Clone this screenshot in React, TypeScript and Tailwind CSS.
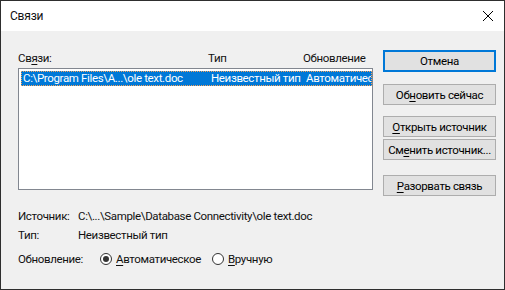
import React from "react";

const U = ({ children }: { children: React.ReactNode }) => (
  <span className="underline underline-offset-[2px] decoration-[1px]">{children}</span>
);

const Btn = ({ children, def = false, cls = "" }: { children: React.ReactNode; def?: boolean; cls?: string }) => (
  <div
    className={`w-[113px] h-[21px] flex items-center justify-center whitespace-nowrap bg-[#e1e1e1] text-black ${
      def ? "border-2 border-[#0078d7]" : "border border-[#adadad]"
    } ${cls}`}
  >
    {children}
  </div>
);

const Radio = ({ checked }: { checked?: boolean }) => (
  <div className="w-[12px] h-[12px] rounded-full border border-[#333] bg-white flex items-center justify-center">
    {checked && <div className="w-[6px] h-[6px] rounded-full bg-[#333]" />}
  </div>
);

export default function App() {
  return (
    <div
      className="w-[505px] h-[290px] border border-[#2e2e2e] bg-[#f0f0f0] flex flex-col text-[11.5px] tracking-[-0.35px] leading-[16px] text-[#111]"
      style={{ fontFamily: 'Roboto, "Noto Sans", sans-serif' }}
    >
      <div className="h-[30px] bg-white flex items-center justify-between pl-[9px] pr-[10px]">
        <span className="text-[12px] tracking-[-0.2px]">Связи</span>
        <svg width="12" height="12" viewBox="0 0 12 12">
          <path d="M1 1 L11 11 M11 1 L1 11" stroke="#000" strokeWidth="1" />
        </svg>
      </div>
      <div className="flex pl-[17px] pt-[19px]">
        <div className="w-[355px] flex flex-col">
          <div className="h-[18px] flex items-start whitespace-nowrap">
            <span className="w-[190px]">
              Св<U>я</U>зи:
            </span>
            <span className="w-[95px]">Тип</span>
            <span>Обновление</span>
          </div>
          <div className="h-[122px] border border-[#828790] bg-white pt-[2px] pl-[2px] overflow-hidden">
            <div className="h-[15px] w-[351px] overflow-hidden bg-[#0078d7] border border-dotted border-[#f7a35a] text-white flex items-center whitespace-nowrap leading-[13px]">
              <span className="w-[189px] shrink-0 pl-[1px] overflow-hidden">C:\Program Files\A...\ole text.doc</span>
              <span className="w-[95px] shrink-0">Неизвестный тип</span>
              <span className="flex-1 overflow-hidden">Автоматическое</span>
            </div>
          </div>
        </div>
        <div className="ml-[10px] flex flex-col">
          <Btn def cls="h-[22px]">Отмена</Btn>
          <Btn cls="mt-[12px]">
            <span>
              Об<U>н</U>овить сейчас
            </span>
          </Btn>
          <Btn cls="mt-[11px]">
            <span>
              <U>О</U>ткрыть источник
            </span>
          </Btn>
          <Btn cls="mt-[2px]">
            <span>
              См<U>е</U>нить источник...
            </span>
          </Btn>
          <Btn cls="mt-[15px]">
            <span>
              <U>Р</U>азорвать связь
            </span>
          </Btn>
        </div>
      </div>
      <div className="pl-[17px] mt-[10px] flex flex-col whitespace-nowrap">
        <div className="flex h-[19px] items-center">
          <span className="w-[60px]">Источник:</span>
          <span>C:\...\Sample\Database Connectivity\ole text.doc</span>
        </div>
        <div className="flex h-[19px] items-center">
          <span className="w-[60px]">Тип:</span>
          <span>Неизвестный тип</span>
        </div>
        <div className="flex h-[23px] items-center mt-[3px]">
          <span className="w-[82px]">Обновление:</span>
          <Radio checked />
          <span className="ml-[4px] w-[96px]">
            <U>А</U>втоматическое
          </span>
          <Radio />
          <span className="ml-[4px]">
            <U>В</U>ручную
          </span>
        </div>
      </div>
    </div>
  );
}
